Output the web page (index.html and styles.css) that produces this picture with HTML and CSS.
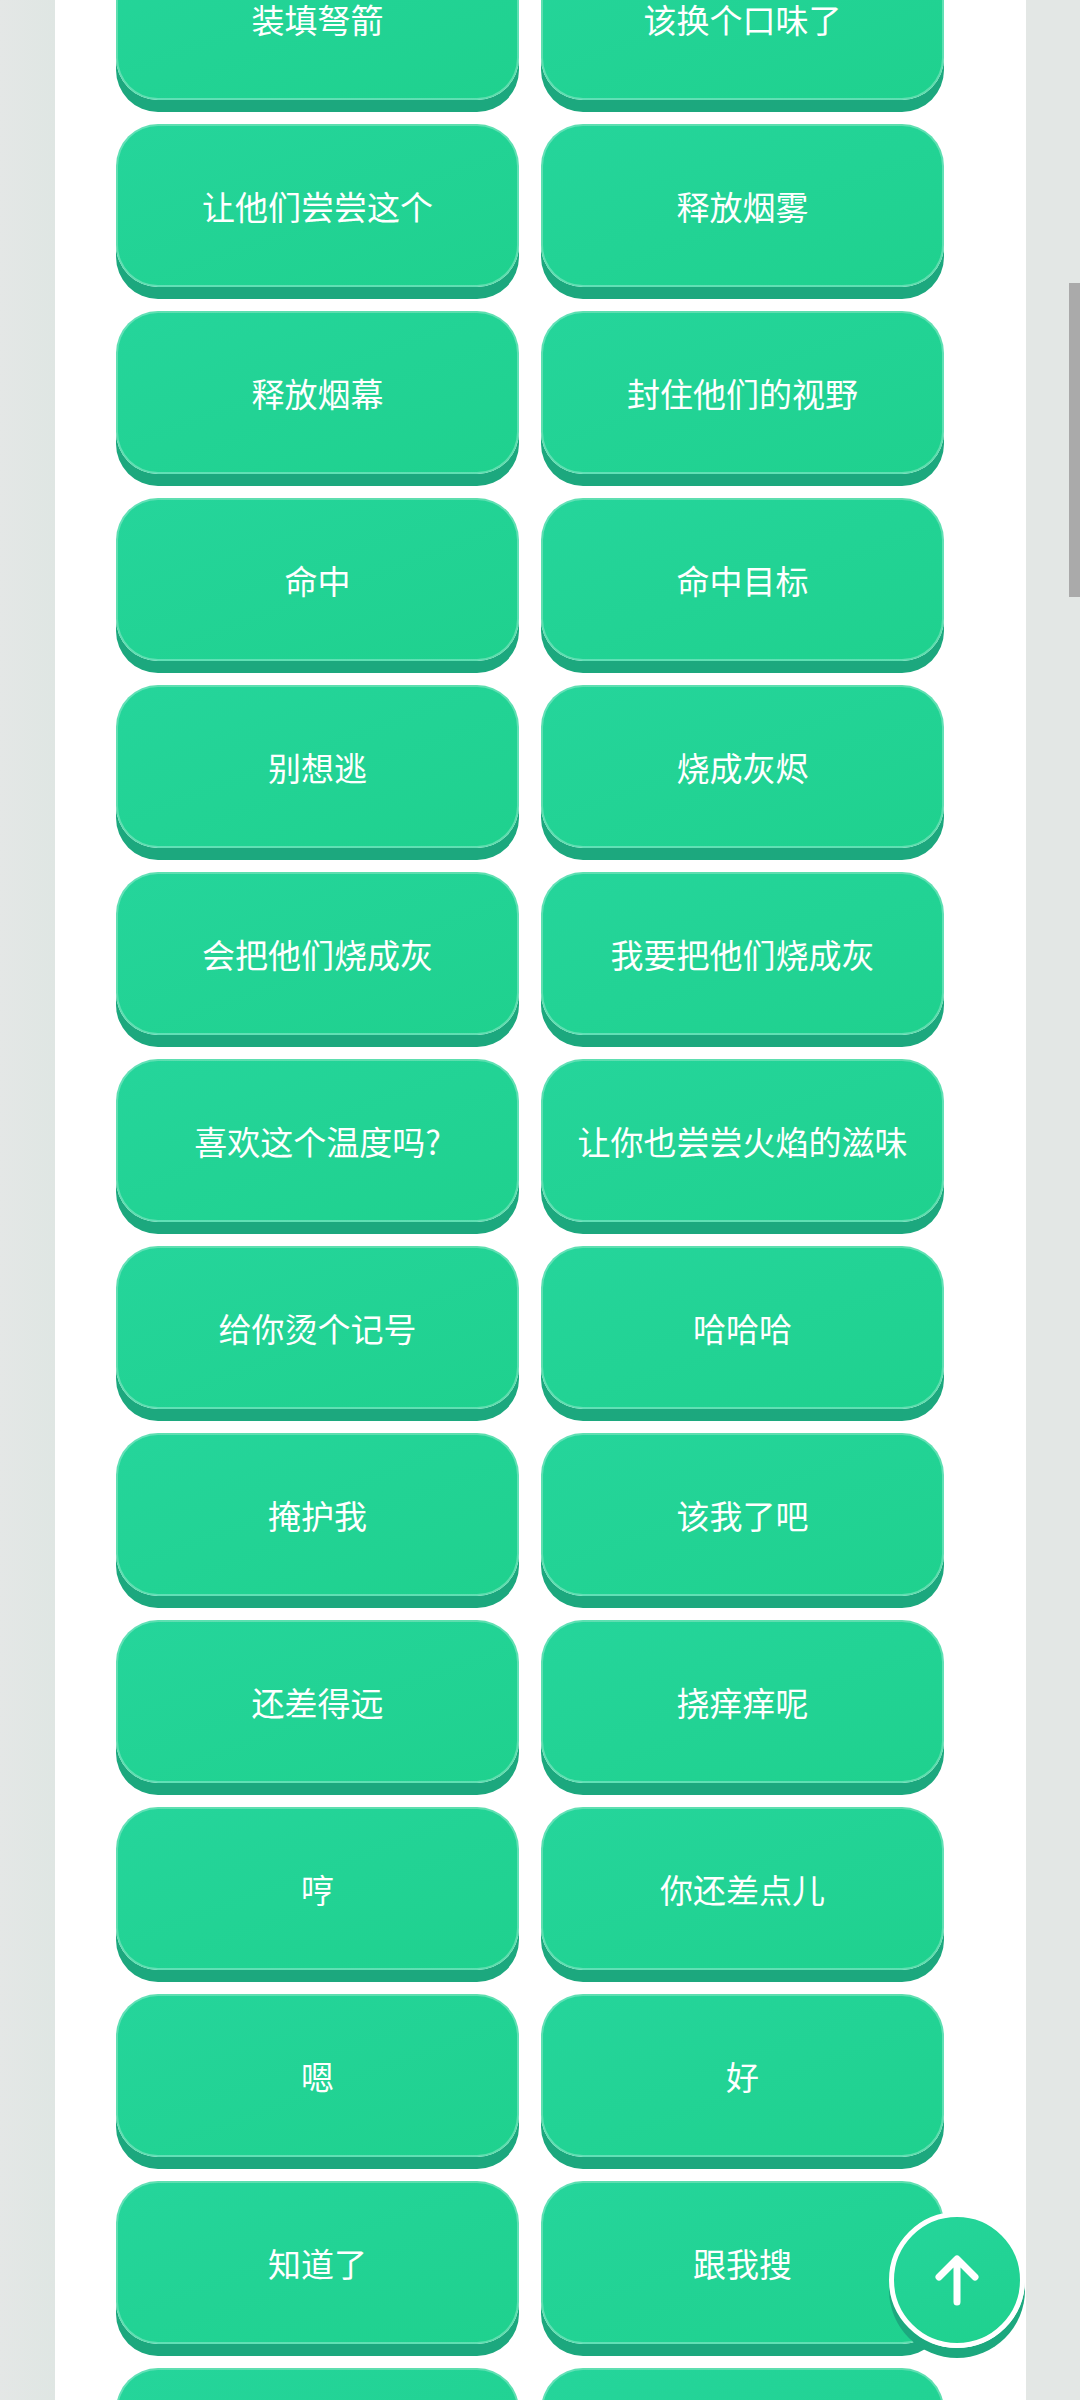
FILE: index.html
```html
<!DOCTYPE html>
<html>
<head>
  <meta charset="utf-8">
  <link rel="stylesheet" href="styles.css">
</head>
<body>
  <div class="page">
    <div class="voice-grid">
      <div class="voice-btn">装填弩箭</div>
      <div class="voice-btn">该换个口味了</div>
      <div class="voice-btn">让他们尝尝这个</div>
      <div class="voice-btn">释放烟雾</div>
      <div class="voice-btn">释放烟幕</div>
      <div class="voice-btn">封住他们的视野</div>
      <div class="voice-btn">命中</div>
      <div class="voice-btn">命中目标</div>
      <div class="voice-btn">别想逃</div>
      <div class="voice-btn">烧成灰烬</div>
      <div class="voice-btn">会把他们烧成灰</div>
      <div class="voice-btn">我要把他们烧成灰</div>
      <div class="voice-btn">喜欢这个温度吗?</div>
      <div class="voice-btn">让你也尝尝火焰的滋味</div>
      <div class="voice-btn">给你烫个记号</div>
      <div class="voice-btn">哈哈哈</div>
      <div class="voice-btn">掩护我</div>
      <div class="voice-btn">该我了吧</div>
      <div class="voice-btn">还差得远</div>
      <div class="voice-btn">挠痒痒呢</div>
      <div class="voice-btn">哼</div>
      <div class="voice-btn">你还差点儿</div>
      <div class="voice-btn">嗯</div>
      <div class="voice-btn">好</div>
      <div class="voice-btn">知道了</div>
      <div class="voice-btn">跟我搜</div>
      <div class="voice-btn"></div>
      <div class="voice-btn"></div>
    </div>
  </div>

  <div class="to-top">
    <svg width="48" height="56" viewBox="0 0 48 56">
      <path d="M24 50 V8 M6 25 L24 7 L42 25" fill="none" stroke="#fff" stroke-width="7" stroke-linecap="round" stroke-linejoin="round"/>
    </svg>
  </div>

  <div class="scroll-thumb"></div>
</body>
</html>
```

FILE: styles.css
```css
html, body {
  margin: 0;
  height: 2400px;
  overflow: hidden;
}

body {
  background: linear-gradient(90deg, #e4e7e6, #dfe6e3 55px, #e3e7e5 56px, #e3e7e5);
  font-family: "Noto Sans CJK SC", "Noto Sans", sans-serif;
}

.page {
  width: 971px;
  height: 2400px;
  margin-left: 55px;
  background: #fff;
  overflow: hidden;
}

.voice-grid {
  display: grid;
  grid-template-columns: 403px 403px;
  column-gap: 22px;
  row-gap: 24px;
  padding-left: 61px;
  margin-top: -63px;
}

.voice-btn {
  height: 163px;
  box-sizing: border-box;
  display: flex;
  align-items: center;
  justify-content: center;
  border-radius: 42px;
  border: 2px solid rgba(255, 255, 255, 0.28);
  background: linear-gradient(160deg, #25d59b, #1fd18e);
  box-shadow: 0 12px 0 #1ca87e;
  color: #fff;
  font-size: 33px;
  white-space: nowrap;
}

.to-top {
  position: fixed;
  left: 889px;
  top: 2212px;
  width: 136px;
  height: 136px;
  box-sizing: border-box;
  border-radius: 50%;
  border: 5px solid #fff;
  background: linear-gradient(160deg, #25d59b, #1fd18e);
  box-shadow: 0 10px 0 #1ca87e;
  display: flex;
  align-items: center;
  justify-content: center;
}

.scroll-thumb {
  position: fixed;
  right: 0;
  top: 283px;
  width: 11px;
  height: 314px;
  background: #aaaaaa;
}
```
